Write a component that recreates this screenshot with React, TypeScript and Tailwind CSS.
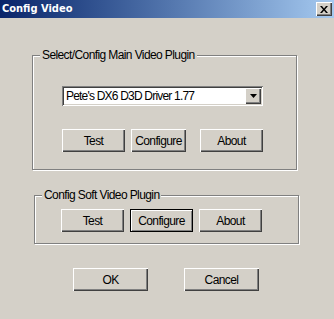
import React from "react";

function Btn({ label, w, focused }: { label: string; w: number; focused?: boolean }) {
  return (
    <div
      className={
        "flex items-center justify-center h-[23px] bg-[#d4d0c8] text-[12px] tracking-[-0.6px] text-black " +
        (focused
          ? "border border-black shadow-[inset_1px_1px_0_#fff,inset_-1px_-1px_0_#808080]"
          : "shadow-[inset_1px_1px_0_#fff,inset_-1px_-1px_0_#404040,inset_-2px_-2px_0_#808080]")
      }
      style={{ width: w }}
    >
      <span>{label}</span>
    </div>
  );
}

function Group({
  label,
  className,
  children,
}: {
  label: string;
  className: string;
  children: React.ReactNode;
}) {
  return (
    <div
      className={
        "relative border border-[#808080] shadow-[inset_1px_1px_0_#fff,1px_1px_0_#fff] " + className
      }
    >
      <span className="absolute left-[7px] top-[-8px] px-[2px] bg-[#d4d0c8] text-[12px] tracking-[-0.6px] leading-[14px] text-black">
        {label}
      </span>
      {children}
    </div>
  );
}

export default function App() {
  return (
    <div
      className="w-[334px] h-[319px] bg-[#d4d0c8] flex flex-col overflow-hidden"
      style={{ fontFamily: '"Liberation Sans", Arial, sans-serif' }}
    >
      <div className="h-[18px] flex items-center justify-between bg-gradient-to-r from-[#0a246a] to-[#a6caf0] pl-[2px] pr-[2px]">
        <span
          className="text-white font-bold text-[11px] leading-[18px]"
          style={{ fontFamily: '"DejaVu Sans Condensed", "DejaVu Sans", sans-serif' }}
        >
          Config Video
        </span>
        <div className="w-[16px] h-[14px] bg-[#d4d0c8] flex items-center justify-center shadow-[inset_1px_1px_0_#fff,inset_-1px_-1px_0_#404040,inset_-2px_-2px_0_#808080]">
          <svg width="8" height="7" viewBox="0 0 8 7">
            <path d="M0 0h2l2 2.5L6 0h2L5 3.5 8 7H6L4 4.5 2 7H0l3-3.5z" fill="#000" />
          </svg>
        </div>
      </div>

      <Group label="Select/Config Main Video Plugin" className="mt-[37px] ml-[32px] w-[265px] h-[115px]">
        <div className="ml-[29px] mt-[30px] w-[201px] h-[20px] bg-white flex items-center shadow-[inset_1px_1px_0_#808080,inset_-1px_-1px_0_#fff,inset_2px_2px_0_#404040,inset_-2px_-2px_0_#d4d0c8]">
          <span className="flex-1 pl-[4px] text-[12px] tracking-[-0.8px] text-black leading-[16px]">
            Pete's DX6 D3D Driver 1.77
          </span>
          <div className="w-[16px] h-[16px] mr-[2px] bg-[#d4d0c8] flex items-center justify-center shadow-[inset_1px_1px_0_#fff,inset_-1px_-1px_0_#404040,inset_-2px_-2px_0_#808080]">
            <svg width="7" height="4" viewBox="0 0 7 4">
              <path d="M0 0h7L3.5 4z" fill="#000" />
            </svg>
          </div>
        </div>
        <div className="ml-[29px] mt-[23px] flex">
          <Btn label="Test" w={63} />
          <div className="w-[6px]" />
          <Btn label="Configure" w={55} />
          <div className="w-[14px]" />
          <Btn label="About" w={63} />
        </div>
      </Group>

      <Group label="Config Soft Video Plugin" className="mt-[25px] ml-[34px] w-[265px] h-[49px]">
        <div className="ml-[26px] mt-[13px] flex gap-[6px]">
          <Btn label="Test" w={63} />
          <Btn label="Configure" w={63} focused />
          <Btn label="About" w={63} />
        </div>
      </Group>

      <div className="mt-[24px] ml-[73px] flex gap-[36px]">
        <Btn label="OK" w={75} />
        <Btn label="Cancel" w={75} />
      </div>
    </div>
  );
}
